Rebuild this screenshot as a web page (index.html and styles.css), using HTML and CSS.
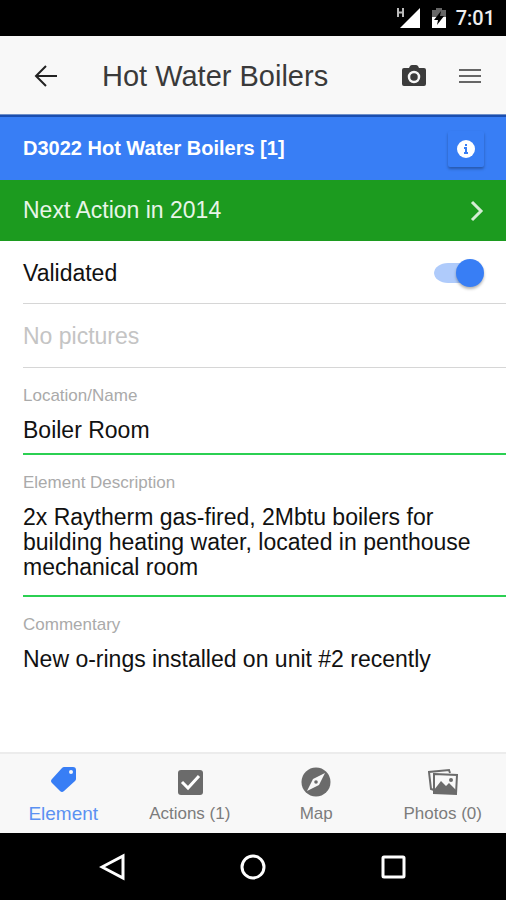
FILE: index.html
```html
<!DOCTYPE html>
<html lang="en">
<head>
  <meta charset="UTF-8" />
  <meta name="viewport" content="width=device-width, initial-scale=1.0"/>
  <title>Hot Water Boilers</title>
  <link rel="stylesheet" href="styles.css">
</head>
<body>

  <!-- Status bar -->
  <div class="status-bar">
    <svg width="26" height="24" viewBox="0 0 26 24" fill="none">
      <path d="M2 2v9M7 2v9M2 6.500h5" stroke="#bbb" stroke-width="2"/>
      <path d="M24 2v20H4z" fill="#fff"/>
    </svg>
    <svg width="16" height="24" viewBox="0 0 16 24">
      <path d="M1 4h4V2h6v2h4v8H1z" fill="#666"/>
      <path d="M1 11h14v11H1z" fill="#fff"/>
      <path d="M10 5l-7 9h4l-1 5 7-9H9z" fill="#000"/>
    </svg>
    <span class="time">7:01</span>
  </div>

  <header class="toolbar">
    <button class="icon-btn" aria-label="Back">
      <svg width="26" height="26" viewBox="0 0 26 26" fill="none" stroke="#222" stroke-width="2">
        <path d="M24 13H3M13 3L3 13l10 10"/>
      </svg>
    </button>
    <h1>Hot Water Boilers</h1>
    <button class="icon-btn" aria-label="Take photo">
      <svg width="26" height="24" viewBox="0 0 26 24">
        <path fill="#3c3c3c" d="M3 4h5l1-2q1-1 2-1h4q1 0 2 1l1 2h5q2 0 2 2v14q0 2-2 2H3q-2 0-2-2V6q0-2 2-2z"/>
        <circle cx="13" cy="13" r="5" fill="none" stroke="#f8f8f8" stroke-width="2.5"/>
      </svg>
    </button>
    <button class="icon-btn" aria-label="Menu">
      <svg width="22" height="18" viewBox="0 0 22 18" stroke="#666" stroke-width="2">
        <path d="M0 3h22M0 9h22M0 15h22"/>
      </svg>
    </button>
  </header>

  <main>
    <div class="element-bar">
      <h2>D3022 Hot Water Boilers [1]</h2>
      <button class="info-btn" aria-label="Info">
        <svg width="18" height="18" viewBox="0 0 18 18">
          <circle cx="9" cy="9" r="9" fill="#fff"/>
          <path d="M7 8h2v5M7 13h4M9 4v2" fill="none" stroke="#387ef5" stroke-width="2"/>
        </svg>
      </button>
    </div>

    <a class="next-action" href="#">
      Next Action in 2014
      <svg width="14" height="22" viewBox="0 0 14 22" fill="none" stroke="#d4edd4" stroke-width="3">
        <path d="M2 2l9 9-9 9"/>
      </svg>
    </a>

    <div class="item">
      <label for="validated">Validated</label>
      <input type="checkbox" id="validated" class="toggle" checked>
    </div>
    <div class="item empty">No pictures</div>

    <form>
      <div class="field">
        <label for="location">Location/Name</label>
        <input type="text" id="location" value="Boiler Room">
      </div>
      <div class="field">
        <label for="description">Element Description</label>
        <textarea id="description" rows="3">2x Raytherm gas-fired, 2Mbtu boilers for building heating water, located in penthouse mechanical room</textarea>
      </div>
      <div class="field plain">
        <label for="commentary">Commentary</label>
        <textarea id="commentary" rows="1">New o-rings installed on unit #2 recently</textarea>
      </div>
    </form>
  </main>

  <nav class="tabs">
    <a href="#" class="active">
      <svg width="30" height="30" viewBox="0 0 30 30">
        <path fill="#387ef5" fill-rule="evenodd" d="M16 2h9q3 0 3 3v9q0 1-1 2L16 26q-2 2-4 0l-8-8q-2-2 0-4L14 3q1-1 2-1zM23 5a2 2 0 1 0 0 4 2 2 0 0 0 0-4z"/>
      </svg>
      Element
    </a>
    <a href="#">
      <svg width="30" height="30" viewBox="0 0 30 30">
        <rect x="3" y="3" width="25" height="25" rx="3" fill="#6b6b6b"/>
        <path d="M7 15l6 6L24 9" fill="none" stroke="#fff" stroke-width="3"/>
      </svg>
      Actions (1)
    </a>
    <a href="#">
      <svg width="30" height="30" viewBox="0 0 30 30">
        <circle cx="15" cy="15" r="14.5" fill="#6b6b6b"/>
        <path d="M24 6l-6 12L6 24l6-12z" fill="#f8f8f8"/>
        <circle cx="15" cy="15" r="1.8" fill="#6b6b6b"/>
      </svg>
      Map
    </a>
    <a href="#">
      <svg width="30" height="30" viewBox="0 0 30 30" fill="none" stroke="#6b6b6b" stroke-width="2">
        <path d="M22 6l-1-3L1 5l2 17 3 1"/>
        <path d="M6 7l23 1-1 19-22-1z" fill="#f8f8f8"/>
        <path d="M6 23l7-9 5 5 3-3 7 7v4L6 26z" fill="#6b6b6b" stroke="none"/>
        <circle cx="23" cy="13" r="2" fill="#6b6b6b" stroke="none"/>
      </svg>
      Photos (0)
    </a>
  </nav>

  <!-- Android buttons -->
  <div class="system-nav">
    <button aria-label="System back">
      <svg width="28" height="28" viewBox="0 0 28 28"><path d="M24 3v22L3 14z"/></svg>
    </button>
    <button aria-label="Home">
      <svg width="28" height="28" viewBox="0 0 28 28"><circle cx="14" cy="14" r="11"/></svg>
    </button>
    <button aria-label="Recent apps">
      <svg width="28" height="28" viewBox="0 0 28 28"><rect x="4" y="4" width="21" height="20" rx="1"/></svg>
    </button>
  </div>

</body>
</html>
```

FILE: styles.css
```css
* {
  box-sizing: border-box;
}

body {
  margin: 0;
  min-height: 100vh;
  display: flex;
  flex-direction: column;
  font-family: "Liberation Sans", Arial, sans-serif;
  font-size: 23px;
  line-height: 25px;
  background: #fff;
  color: #111;
}

button {
  border: none;
  background: none;
  padding: 0;
  cursor: pointer;
}

svg {
  display: block;
}

a {
  text-decoration: none;
}

.status-bar {
  display: flex;
  align-items: center;
  justify-content: flex-end;
  gap: 9px;
  height: 36px;
  padding-right: 11px;
  background: #000;
  color: #eee;
}

.time {
  font: 500 20px Roboto, sans-serif;
}

.toolbar {
  display: flex;
  align-items: center;
  height: 79px;
  padding: 2px 8px 0 18px;
  background: #f8f8f8;
  border-bottom: 1px solid #6e8fc8;
}

.toolbar h1 {
  flex: 1;
  margin: 0 0 0 28px;
  font-size: 29px;
  line-height: 36px;
  font-weight: normal;
  color: #3a3a3a;
}

.icon-btn {
  display: flex;
  align-items: center;
  justify-content: center;
  width: 56px;
  height: 56px;
}

.element-bar {
  display: flex;
  align-items: center;
  justify-content: space-between;
  height: 65px;
  padding: 0 22px 0 23px;
  background: #387ef5;
  border-top: 2px solid #1b4eae;
  color: #fff;
}

.element-bar h2 {
  margin: 0;
  font-size: 20px;
}

.info-btn {
  display: flex;
  align-items: center;
  justify-content: center;
  width: 36px;
  height: 36px;
  border-radius: 2px;
  box-shadow: 0 2px 3px rgba(0,0,0,0.3);
}

.next-action {
  display: flex;
  align-items: center;
  justify-content: space-between;
  height: 61px;
  padding: 0 22px 0 23px;
  background: #1c9b1f;
  color: #e8f5e8;
}

.item {
  display: flex;
  align-items: center;
  justify-content: space-between;
  height: 63px;
  margin-left: 23px;
  padding: 2px 22px 0 0;
  border-bottom: 1px solid #d6d6d6;
}

.item.empty {
  height: 64px;
  color: #c4c4c4;
}

.toggle {
  appearance: none;
  display: flex;
  align-items: center;
  width: 50px;
  height: 28px;
  margin: 0;
  border: 4px solid transparent;
  border-left-width: 0;
  border-radius: 14px;
  background: #afcbfb;
  background-clip: padding-box;
  cursor: pointer;
}

.toggle::before {
  content: "";
  flex: none;
  width: 28px;
  height: 28px;
  border-radius: 50%;
  background: #fff;
  box-shadow: 0 2px 3px rgba(0,0,0,0.3);
}

.toggle:checked::before {
  margin: 0 -4px 0 auto;
  background: #387ef5;
}

.field {
  display: flex;
  flex-direction: column;
  gap: 12px;
  margin-left: 23px;
  padding-top: 18px;
  border-bottom: 2px solid #2bd052;
}

.field.plain {
  border-bottom: none;
}

.field label {
  font-size: 17px;
  line-height: 20px;
  color: #aaa;
}

.field input,
.field textarea {
  display: block;
  width: 100%;
  margin: 0;
  padding: 0 22px 10px 0;
  border: none;
  outline: none;
  background: none;
  font: inherit;
  color: inherit;
  resize: none;
}

.field textarea {
  padding-bottom: 15px;
  overflow: hidden;
}

.tabs {
  display: flex;
  height: 81px;
  margin-top: auto;
  background: #f8f8f8;
  border-top: 2px solid #ececec;
}

.tabs a {
  flex: 1;
  display: flex;
  flex-direction: column;
  align-items: center;
  justify-content: flex-end;
  gap: 6px;
  padding-bottom: 8px;
  font-size: 17px;
  line-height: 22px;
  color: #7c7c7c;
}

.tabs a.active {
  gap: 8px;
  font-size: 19px;
  color: #5b91f2;
}

.system-nav {
  display: flex;
  align-items: center;
  justify-content: center;
  gap: 112px;
  height: 67px;
  background: #000;
}

.system-nav svg {
  fill: none;
  stroke: #fff;
  stroke-width: 3;
}
```
